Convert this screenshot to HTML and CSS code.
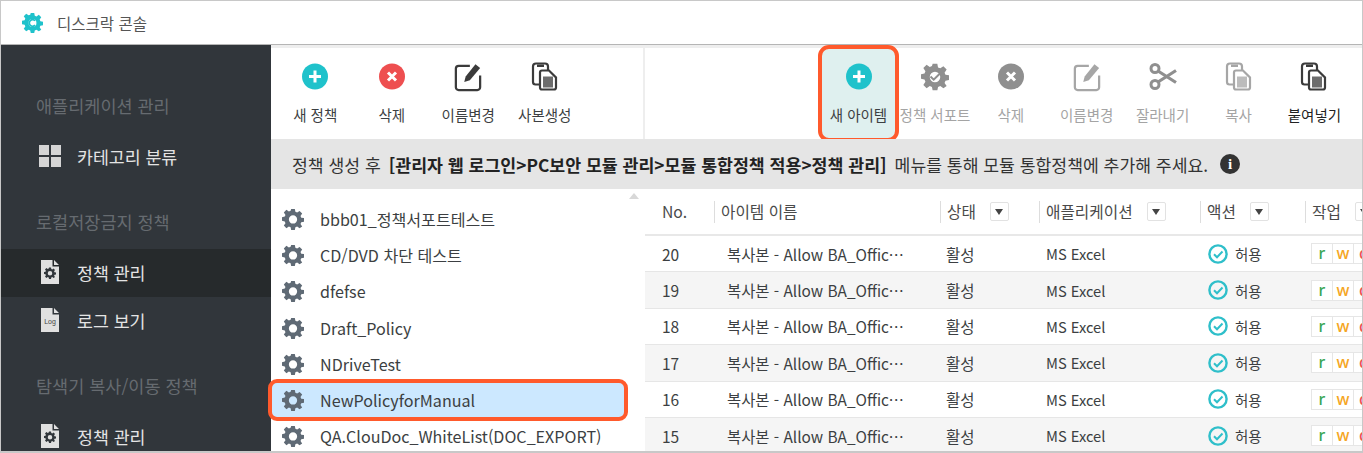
FILE: index.html
```html
<!DOCTYPE html>
<html lang="ko">
<head>
<meta charset="utf-8">
<title>디스크락 콘솔</title>
<link rel="stylesheet" href="styles.css">
</head>
<body>
<svg class="defs" width="0" height="0" aria-hidden="true">
  <symbol id="gear" viewBox="0 0 24 24">
    <path fill="currentColor" fill-rule="evenodd" d="M10 1h4l.6 3.200 1.900.8L19.200 3.200 22 6l-1.800 2.700.8 1.900L24 11v4l-3 .6-.8 1.900 1.800 2.700L19.200 22l-2.700-1.800-1.900.8L14 24h-4l-.6-3-1.900-.8L4.800 22 2 19.200l1.800-2.700-.8-1.900L0 14v-4l3-.6.8-1.900L2 4.800 4.800 2l2.700 1.800 1.900-.8z M12 8a4.500 4.500 0 1 0 0 9 4.500 4.500 0 0 0 0-9z"/>
  </symbol>
  <symbol id="paste" viewBox="0 0 28 30">
    <path d="M8 23H4.500A2.500 2.500 0 0 1 2 20.500V5a3 3 0 0 1 3-3h9a3 3 0 0 1 3 3v4" fill="none" stroke="currentColor" stroke-width="2.200"/>
    <path d="M6 3h7v2.500H6z" fill="currentColor"/>
    <path d="M9 11a2 2 0 0 1 2-2h7l7 7v10a2 2 0 0 1-2 2H11a2 2 0 0 1-2-2z" fill="#fff" stroke="currentColor" stroke-width="2.200"/>
    <path d="M12 15h10v11H12z" fill="currentColor" opacity=".75"/>
  </symbol>
  <symbol id="edit" viewBox="0 0 30 30">
    <path d="M17 3.500H5A3 3 0 0 0 2 6.500v20a3 3 0 0 0 3 3h20a3 3 0 0 0 3-3V14" fill="none" stroke="currentColor" stroke-width="2.400"/>
    <path d="M11 21l1.500-6L23 2l5 4L17 19z" fill="currentColor"/>
  </symbol>
  <symbol id="check" viewBox="0 0 20 20">
    <circle cx="10" cy="10" r="8.600" fill="none" stroke="currentColor" stroke-width="2.400"/>
    <path d="M6 10.200l3 3 5.500-5.700" fill="none" stroke="currentColor" stroke-width="2"/>
  </symbol>
  <symbol id="doc" viewBox="0 0 18 24">
    <path d="M0 0h11.500v6.500H18V24H0z M13 0l5 5h-5z" fill="currentColor"/>
  </symbol>
</svg>

<div class="app">
  <header class="titlebar">
    <svg class="logo" viewBox="0 0 24 24"><use href="#gear"/><path d="M15 10a3.800 3.800 0 1 0 0 5" fill="none" stroke="currentColor" stroke-width="2"/></svg>
    <span class="title">디스크락 콘솔</span>
  </header>

  <div class="body">
    <nav class="sidebar">
      <div class="nav-head">애플리케이션 관리</div>
      <div class="nav-item">
        <span class="grid-icon"><i></i><i></i><i></i><i></i></span>
        <span>카테고리 분류</span>
      </div>
      <div class="nav-head">로컬저장금지 정책</div>
      <div class="nav-item active">
        <svg class="doc-icon" viewBox="0 0 18 24"><use href="#doc"/><use class="doc-gear" href="#gear" x="3" y="7" width="12" height="12"/></svg>
        <span>정책 관리</span>
      </div>
      <div class="nav-item">
        <svg class="doc-icon" viewBox="0 0 18 24"><use href="#doc"/><text class="log" x="9" y="15.500">Log</text></svg>
        <span>로그 보기</span>
      </div>
      <div class="nav-head">탐색기 복사/이동 정책</div>
      <div class="nav-item">
        <svg class="doc-icon" viewBox="0 0 18 24"><use href="#doc"/><use class="doc-gear" href="#gear" x="3" y="7" width="12" height="12"/></svg>
        <span>정책 관리</span>
      </div>
    </nav>

    <main class="main">
      <div class="toolbars">
        <div class="toolbar left-tools">
          <div class="tool">
            <svg class="ic" viewBox="0 0 28 28"><circle cx="14" cy="14" r="13" fill="#1fc2cb"/><path d="M14 8v12M8 14h12" stroke="#fff" stroke-width="3"/></svg>
            <span>새 정책</span>
          </div>
          <div class="tool">
            <svg class="ic" viewBox="0 0 28 28"><circle cx="14" cy="14" r="13" fill="#ee4f50"/><path d="M10 10l8 8M18 10l-8 8" stroke="#fff" stroke-width="3"/></svg>
            <span>삭제</span>
          </div>
          <div class="tool">
            <svg class="ic dark"><use href="#edit"/></svg>
            <span>이름변경</span>
          </div>
          <div class="tool">
            <svg class="ic dark"><use href="#paste"/></svg>
            <span>사본생성</span>
          </div>
        </div>
        <div class="toolbar right-tools">
          <div class="tool hl">
            <svg class="ic" viewBox="0 0 28 28"><circle cx="14" cy="14" r="13" fill="#1fc2cb"/><path d="M14 8v12M8 14h12" stroke="#fff" stroke-width="3"/></svg>
            <span>새 아이템</span>
          </div>
          <div class="tool off">
            <svg class="ic grey" viewBox="0 0 28 28"><use href="#gear"/><path d="M9.500 14l3.200 3.200 6-6" fill="none" stroke="currentColor" stroke-width="2"/></svg>
            <span>정책 서포트</span>
          </div>
          <div class="tool off">
            <svg class="ic" viewBox="0 0 28 28"><circle cx="14" cy="14" r="13" fill="#8f8f8f"/><path d="M10 10l8 8M18 10l-8 8" stroke="#fff" stroke-width="3"/></svg>
            <span>삭제</span>
          </div>
          <div class="tool off">
            <svg class="ic light"><use href="#edit"/></svg>
            <span>이름변경</span>
          </div>
          <div class="tool off">
            <svg class="ic grey" viewBox="0 0 28 28"><circle cx="6" cy="6" r="4" fill="none" stroke="currentColor" stroke-width="3"/><circle cx="6" cy="22" r="4" fill="none" stroke="currentColor" stroke-width="3"/><path d="M9 8.500L27 20M9 19.500L27 8" stroke="currentColor" stroke-width="3.200"/></svg>
            <span>잘라내기</span>
          </div>
          <div class="tool off">
            <svg class="ic light"><use href="#paste"/></svg>
            <span>복사</span>
          </div>
          <div class="tool strong">
            <svg class="ic dark"><use href="#paste"/></svg>
            <span>붙여넣기</span>
          </div>
        </div>
      </div>

      <div class="notice">
        <span>정책 생성 후</span>
        <b>[관리자 웹 로그인&gt;PC보안 모듈 관리&gt;모듈 통합정책 적용&gt;정책 관리]</b>
        <span>메뉴를 통해 모듈 통합정책에 추가해 주세요.</span>
        <span class="info">i</span>
      </div>

      <div class="content">
        <section class="policy-list">
          <span class="scroll-up"></span>
          <div class="policy"><svg class="gear"><use href="#gear"/></svg><span>bbb01_정책서포트테스트</span></div>
          <div class="policy"><svg class="gear"><use href="#gear"/></svg><span>CD/DVD 차단 테스트</span></div>
          <div class="policy"><svg class="gear"><use href="#gear"/></svg><span>dfefse</span></div>
          <div class="policy"><svg class="gear"><use href="#gear"/></svg><span>Draft_Policy</span></div>
          <div class="policy"><svg class="gear"><use href="#gear"/></svg><span>NDriveTest</span></div>
          <div class="policy selected"><svg class="gear"><use href="#gear"/></svg><span>NewPolicyforManual</span></div>
          <div class="policy"><svg class="gear"><use href="#gear"/></svg><span>QA.ClouDoc_WhiteList(DOC_EXPORT)</span></div>
        </section>

        <section class="items">
          <div class="row head">
            <div class="c-no"><span>No.</span></div>
            <div class="c-name sep"><span>아이템 이름</span></div>
            <div class="c-state sep"><span>상태</span><i class="filter"></i></div>
            <div class="c-app sep"><span>애플리케이션</span><i class="filter"></i></div>
            <div class="c-act sep"><span>액션</span><i class="filter"></i></div>
            <div class="c-work sep"><span>작업</span><i class="filter"></i></div>
          </div>
          <div class="row"><div class="c-no">20</div><div class="c-name"><span class="clip">복사본 - Allow BA_Office_Excel</span></div><div class="c-state">활성</div><div class="c-app">MS Excel</div><div class="c-act"><svg class="ok"><use href="#check"/></svg>허용</div><div class="c-work"><span class="perm"><b class="r">r</b><b class="w">w</b><b class="x">d</b></span></div></div>
          <div class="row alt"><div class="c-no">19</div><div class="c-name"><span class="clip">복사본 - Allow BA_Office_Excel</span></div><div class="c-state">활성</div><div class="c-app">MS Excel</div><div class="c-act"><svg class="ok"><use href="#check"/></svg>허용</div><div class="c-work"><span class="perm"><b class="r">r</b><b class="w">w</b><b class="x">d</b></span></div></div>
          <div class="row"><div class="c-no">18</div><div class="c-name"><span class="clip">복사본 - Allow BA_Office_Excel</span></div><div class="c-state">활성</div><div class="c-app">MS Excel</div><div class="c-act"><svg class="ok"><use href="#check"/></svg>허용</div><div class="c-work"><span class="perm"><b class="r">r</b><b class="w">w</b><b class="x">d</b></span></div></div>
          <div class="row alt"><div class="c-no">17</div><div class="c-name"><span class="clip">복사본 - Allow BA_Office_Excel</span></div><div class="c-state">활성</div><div class="c-app">MS Excel</div><div class="c-act"><svg class="ok"><use href="#check"/></svg>허용</div><div class="c-work"><span class="perm"><b class="r">r</b><b class="w">w</b><b class="x">d</b></span></div></div>
          <div class="row"><div class="c-no">16</div><div class="c-name"><span class="clip">복사본 - Allow BA_Office_Excel</span></div><div class="c-state">활성</div><div class="c-app">MS Excel</div><div class="c-act"><svg class="ok"><use href="#check"/></svg>허용</div><div class="c-work"><span class="perm"><b class="r">r</b><b class="w">w</b><b class="x">d</b></span></div></div>
          <div class="row alt"><div class="c-no">15</div><div class="c-name"><span class="clip">복사본 - Allow BA_Office_Excel</span></div><div class="c-state">활성</div><div class="c-app">MS Excel</div><div class="c-act"><svg class="ok"><use href="#check"/></svg>허용</div><div class="c-work"><span class="perm"><b class="r">r</b><b class="w">w</b><b class="x">d</b></span></div></div>
        </section>
      </div>
    </main>
  </div>
</div>
</body>
</html>
```

FILE: styles.css
```css
* { box-sizing: border-box; }
html, body { margin: 0; height: 100%; background: #fff; overflow: hidden; }
body { font-family: "Noto Sans CJK KR", "Noto Sans", sans-serif; color: #3c3f42; }
.defs { position: absolute; }

.app { height: 453px; display: flex; flex-direction: column; border: 1px solid #c8c8c8; border-bottom-width: 2px; overflow: hidden; }
.titlebar { height: 44px; flex: none; display: flex; align-items: center; gap: 14px; padding-left: 21px; border-bottom: 1px solid #b5b5b5; }
.logo { width: 21px; height: 21px; color: #1fc2cb; }
.title { font-size: 15.500px; color: #555; }

.body { flex: 1; min-height: 0; display: flex; }
.sidebar { width: 270px; flex: none; background: #31363b; padding-top: 20px; }
.nav-head { height: 68px; padding: 0 0 17px 35px; display: flex; align-items: flex-end; font-size: 17.500px; line-height: 20px; color: #666b70; white-space: nowrap; }
.nav-item { height: 48px; display: flex; align-items: center; gap: 16px; padding: 0 0 2px 38px; font-size: 17.300px; color: #e4e4e4; }
.nav-item.active { background: #262a2c; }
.grid-icon { width: 22px; height: 22px; display: grid; grid-template-columns: 1fr 1fr; gap: 2px; }
.grid-icon i { background: #d5d5d5; }
.doc-icon { width: 18px; height: 24px; margin: 0 2px; color: #e0e0e0; }
.doc-gear { color: #31363b; }
.log { font: 7px "Liberation Sans", sans-serif; fill: #444; text-anchor: middle; }

.main { flex: 1; min-width: 0; display: flex; flex-direction: column; border-top: 3px solid #eee; }
.toolbars { height: 91px; flex: none; display: flex; }
.toolbar { display: flex; height: 100%; }
.left-tools { width: 374px; padding-left: 6px; border-right: 2px solid #eee; }
.right-tools { flex: 1; padding-left: 172px; }
.tool { width: 75.900px; flex: none; display: flex; flex-direction: column; align-items: center; padding-top: 12px; font-size: 14.500px; color: #3c3f42; white-space: nowrap; }
.left-tools .tool { width: 76.500px; }
.tool span { margin-top: 12px; line-height: 20px; }
.ic { width: 28px; height: 33px; flex: none; color: #444; }
.ic.dark { color: #3b3b3b; }
.ic.grey { color: #8f8f8f; }
.ic.light { color: #a6a6a6; }
.tool.off { color: #a4a4a4; }
.tool.strong { color: #222; }
.tool.hl { width: 75px; margin: 0 1px 0 4px; background: #dff0ef; border-radius: 8px; outline: 4px solid #ff5a2c; outline-offset: -1px; color: #3c3f42; }

.notice { height: 50px; flex: none; background: #e5e5e5; display: flex; align-items: center; gap: 8px; padding-left: 21px; font-size: 17.200px; color: #333; white-space: nowrap; }
.notice b { font-size: 17.300px; font-weight: 700; color: #222; }
.info { width: 20px; height: 20px; margin-left: 4px; border-radius: 50%; background: #333; color: #fff; display: flex; align-items: center; justify-content: center; font: 700 15px "Liberation Serif", serif; }

.content { flex: 1; min-height: 0; display: flex; }
.policy-list { width: 374px; flex: none; padding-top: 11.500px; position: relative; }
.scroll-up { position: absolute; top: 4px; left: 358px; border: 5px solid transparent; border-top-width: 0; border-bottom: 6px solid #d8d8d8; }
.policy { height: 36.300px; display: flex; align-items: center; gap: 16px; padding-left: 11px; font-size: 16.100px; color: #3c3f42; white-space: nowrap; }
.policy.selected { width: 354px; background: #cce8ff; border-radius: 6px; outline: 4px solid #ff5a2c; outline-offset: -1px; }
.gear { width: 22px; height: 22px; flex: none; color: #5f6a75; }

.items { flex: 1; min-width: 0; overflow: hidden; }
.row { height: 36.400px; display: flex; align-items: center; font-size: 15.500px; color: #3c3f42; border-bottom: 1px solid #e6e6e6; width: 740px; }
.row.alt { background: #f5f5f5; }
.row.head { height: 47px; font-size: 15.700px; color: #4a4a4a; border-bottom: 2px solid #e8e8e8; }
.row > div { height: 100%; display: flex; align-items: center; flex: none; }
.c-no { width: 69px; padding-left: 17px; }
.c-name { width: 226px; padding-left: 13px; }
.c-state { width: 99px; padding-left: 6px; }
.c-app { width: 161px; padding-left: 7px; font-size: 14.700px; }
.c-act { width: 105px; padding-left: 8px; gap: 7px; font-size: 14.500px; }
.c-work { flex: 1; padding-left: 7px; }
.head .c-app, .head .c-act { font-size: 15.700px; }
.head .c-act { gap: 0; }
.head .sep { padding-left: 0; }
.head .sep::before { content: ""; width: 1px; height: 22px; background: #ddd; margin-right: 6px; }
.filter { width: 19px; height: 19px; margin-left: 14px; flex: none; border: 1px solid #e2e2e2; border-radius: 2px; display: flex; align-items: center; justify-content: center; }
.filter::before { content: ""; border: 4px solid transparent; border-top: 6px solid #444; border-bottom-width: 0; }
.clip { width: 183px; font-size: 15.400px; overflow: hidden; white-space: nowrap; text-overflow: ellipsis; }
.ok { width: 20px; height: 20px; color: #2fbfca; flex: none; }
.perm { display: flex; border: 1px solid #e6e6e6; height: 21px; background: #fff; margin-left: -1px; }
.perm b { width: 21px; text-align: center; font: 500 16px/19px "Noto Sans", sans-serif; border-right: 1px solid #e6e6e6; }
.perm .r { color: #3aa655; }
.perm .w { color: #f5a623; }
.perm .x { color: #ee4f50; }
```
